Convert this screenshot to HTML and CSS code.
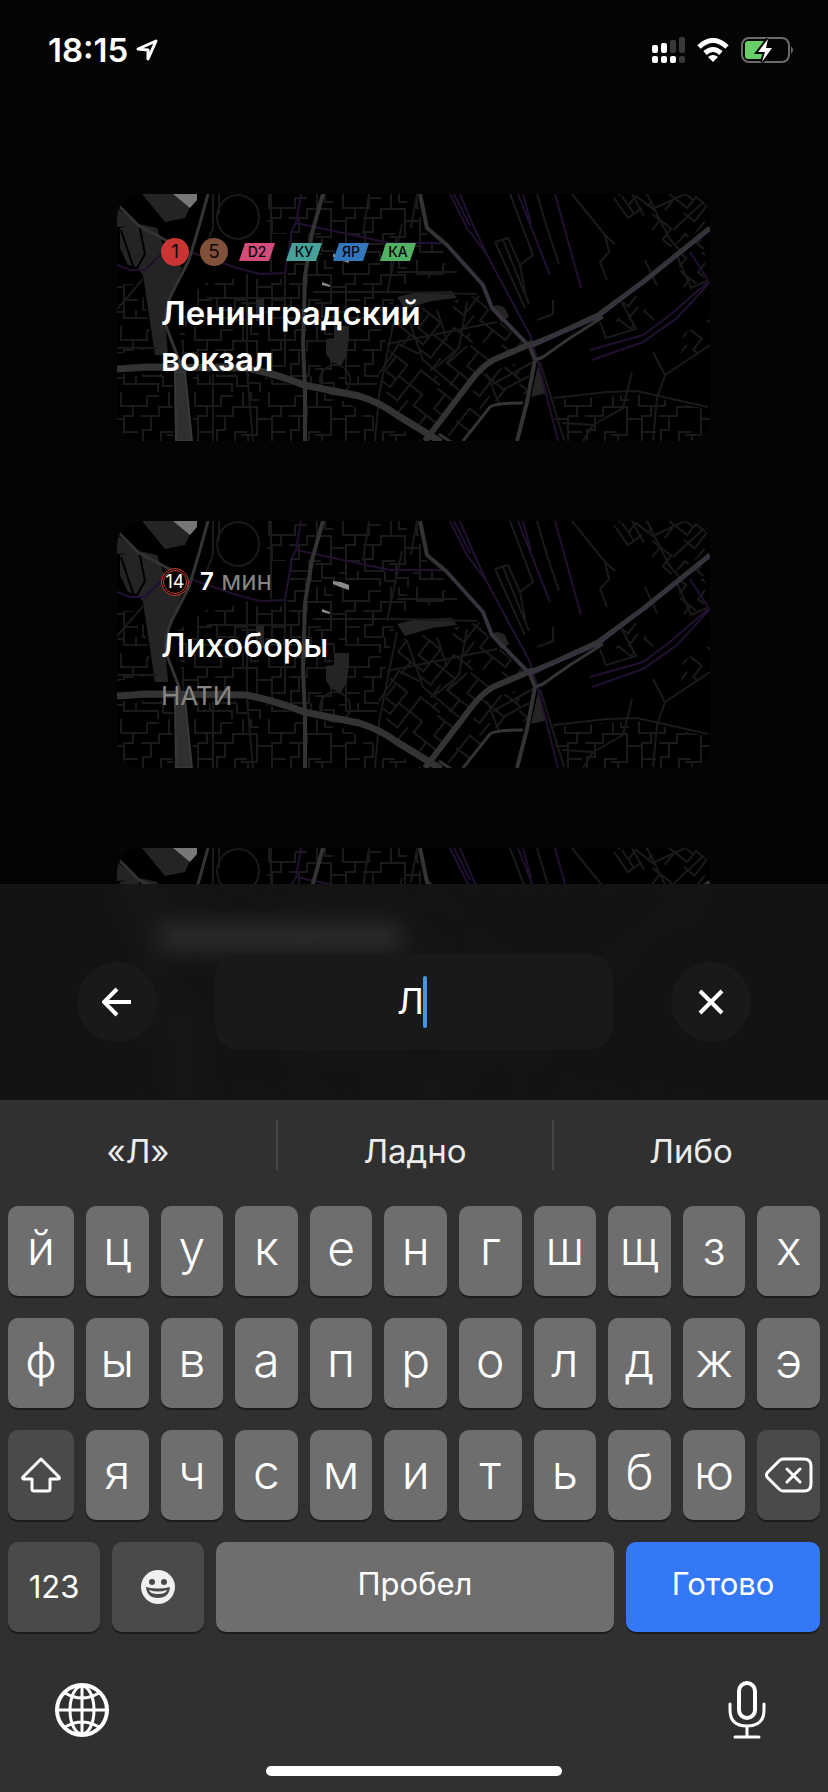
FILE: index.html
```html
<!DOCTYPE html>
<html lang="ru">
<head>
<meta charset="utf-8">
<meta name="viewport" content="width=device-width, initial-scale=1">
<title>Поиск станции</title>
<link rel="stylesheet" href="styles.css">
</head>
<body>
<svg class="defs" aria-hidden="true">
  <defs>
    <pattern id="blocks" width="74" height="66" patternUnits="userSpaceOnUse">
      <path class="lane" d="M4 0v14h12v10h-9v16h14M16 14h14V4M24 24h18v-9h10V0M34 24v14h-8v12h18v-10h12M7 40v18h12v-8M19 58h22v8M52 15h14v12h8M66 27v16h-9v14h12v9M46 50v10h11M0 27h7M30 4h12M57 43h-7M60 0v8h8M0 52h7"/>
    </pattern>
    <pattern id="blocks-slant" width="62" height="54" patternUnits="userSpaceOnUse" patternTransform="rotate(38)">
      <path class="lane" d="M0 10h24v14h14V6h24M10 10v18h14M24 24v14H8v16M38 24h16v14h8M38 24v20h-14M46 38v16M0 38h8M54 6V0"/>
    </pattern>
    <symbol id="map" viewBox="0 0 593 247" preserveAspectRatio="xMidYMid slice">
      <rect width="593" height="247" fill="#000"/>
      <path fill="url(#blocks)" d="M150 0H300L306 36 326 54 330 80 280 92 258 200 187 190 150 176 66 170 60 110 95 85H170L172 40H150z"/>
      <path fill="url(#blocks)" d="M0 180h56v67H0zM76 180l60 0 80 22 90 45H76zM0 90l24 0 12 64-36 6zM436 206l84-6 73 16v31H440z"/>
      <path fill="url(#blocks-slant)" d="M262 205l20-86 80-18 12 18 38 36-60 32-40 55zM366 180l44-14v34l-34 8-28 36-18-2zM500 0h93v30l-40 24zM560 62l28-22v42l-20 18zM496 118l20-20 22 28-34 14zM566 140l27-16v26l-30 20z"/>
      <g fill="#242424">
        <path d="M25 0h31l17 13-5 11-20 4zM18 29l22 5 6 17 19 23-12 30-5 20 3 37H38L26 81 20 73 11 71 3 54V34z"/>
        <path d="M217 132h15v11l-2 17-6 12-9-4-6-8v-15l8-1zM280 103l20-5 35-1 5 7-25 3-27 8zM421 171l9 28-16 4zM375 114q4-6 13 0l4 9-8 5zM139 103h8v24h-8z"/>
        <path d="M0 14l22 17-22 2z"/>
      </g>
      <path class="gap" d="M4 36l12 36M22 30l6 30-8 14"/>
      <path d="M56 0h24v6l-7 8z" fill="#777"/>
      <path d="M216 60l8 1 8 3v5l-9-3-7-3zM205 88l8 3v2l-8-2z" fill="#888"/>
      <g class="lane">
        <ellipse cx="121" cy="23" rx="21" ry="22"/><circle cx="218" cy="186" r="15"/>
        <path d="M96 0v34l-8 20M102 0v20M154 0v78M130 80v94M168 80v92M0 115l26-30M0 154h40M90 104h90M196 98h84l80 2M280 78h60M270 100l15-70M300 0l-6 34M252 0l-6 40M258 247l4-46 18-90M96 180v67M130 178l6 69"/>
        <path d="M393 0l23 61-13 10 5 27M420 0l10 34 12 36M378 48l13-4 12 27M378 48l30 66M386 46l26 64M455 0l33 41 4 17-9 10 7 18M488 41l10 9"/>
        <path d="M436 204l54-6 30-1 71 16M445 229l31 2 30-17 9-36M536 158l12 23-8 23-4 42M548 181l45-30M476 231l-10 16M423 168l24 78"/>
        <path d="M497 4l14 20 14-10M505 2l12 18M515 0l12 22M530 0l22 44 12 14M538 14l30-14M556 36l37-34M483 128l6 16 30-9-16-30M420 126l16-6v-14M560 62l14 32 18-8M528 66l12 26"/>
        <path d="M270 150l50-10 60-12M262 180l20-30 20 10M290 120l16 46 36 30M320 116l10 30M350 108l-8 46-24 20M330 170l20-18M370 180l12 30M376 190l40-22M386 196l26-14"/>
      </g>
      <g class="rail">
        <path d="M0 71l13 5h15l18-18 30 1 44 15 23 6 25-1 7-43 4-7 5-29M179 29l94 20h55"/>
        <path d="M333 0l17 34 20 27 43 80 8 27 20 79M343 0l13 31 15 32M337 0l16 32M401 0l32 81M406 0l8 30M438 0l26 94M473 156l53-15 27-20 38-33M475 166l51-18 34-24 33-36M573 58l18 28"/>
      </g>
      <g class="road">
        <path class="w3" d="M0 10l22 22 38 20M91 0l-8 29-11 37-17 33q-8 17-6 33l13 34 2 12"/>
        <path class="w4" d="M206 0l-11 39-7 43-2 67 2 47v51"/>
        <path class="w7" d="M0 175l30-2 99 1q30 6 58 17l55 11q20 6 38 19l44 27"/>
        <path class="w4" d="M303 0l7 34 20 17 36 40 9 23 38 39 5 13-8 42-10 39"/>
        <path class="w6" d="M308 247l45-59q10-14 23-22l40-17"/>
        <path class="w3" d="M413 150l68-27M423 165l30-21 33-21M418 166l10-4M346 247l27-34q4-4 33-4M322 240l12 8"/>
        <path class="w5" d="M416 151l65-30 45-33 67-54"/>
      </g>
      <path d="M58 178h10l7 69H59z" fill="#2f2f2f" stroke="#383838" stroke-width="2"/>
      <path class="rail soft" d="M330 51l36 40 9 23 38 39 68-29 45-35 67-53"/>
    </symbol>
  </defs>
</svg>

<header class="status">
  <div class="status-side">
    <span class="clock">18:15</span>
    <svg width="22" height="22" viewBox="0 0 22 22" fill="none" stroke="#fff" stroke-width="3" stroke-linejoin="round"><path d="M2 10L20 2 12 20V11z"/></svg>
  </div>
  <div class="status-side status-right">
    <svg width="33" height="26" viewBox="0 0 33 26" fill="#fff"><rect y="8" width="6" height="8" rx="2"/><rect x="9" y="6" width="6" height="10" rx="2"/><rect y="19" width="6" height="7" rx="2"/><rect x="9" y="19" width="6" height="7" rx="2"/><rect x="18" y="19" width="6" height="7" rx="2"/><g fill="#383838"><rect x="18" y="3" width="6" height="13" rx="2"/><rect x="27" width="6" height="16" rx="2"/><rect x="27" y="19" width="6" height="7" rx="2"/></g></svg>
    <svg width="32" height="24" viewBox="0 0 32 24"><g fill="none" stroke="#fff" stroke-width="5"><path d="M2 9Q16-4 30 9"/><path d="M8 15q8-7 16 0"/></g><path d="M11 19q5-4 10 0l-5 5z" fill="#fff"/></svg>
    <svg width="54" height="26" viewBox="0 0 54 26"><rect x="1" y="1" width="47" height="24" rx="7" fill="none" stroke="#6b6b6b" stroke-width="2"/><path d="M50 9q4 4 0 8z" fill="#6b6b6b"/><path d="M7 4h17v18H7q-3 0-3-3V7q0-3 3-3z" fill="#67ce67"/><path d="M27 2L17 15h7l-3 10 10-14h-6z" fill="#fff" stroke="#040404" stroke-width="4" paint-order="stroke"/></svg>
  </div>
</header>

<main class="results">
  <article class="card">
    <svg class="map"><use href="#map"/></svg>
    <div class="meta">
      <span class="line red">1</span><span class="line brown">5</span>
      <span class="tag pink">D2</span><span class="tag teal">КУ</span><span class="tag blue">ЯР</span><span class="tag green">КА</span>
    </div>
    <h2 class="title bold">Ленинградский вокзал</h2>
  </article>
  <article class="card station">
    <svg class="map"><use href="#map"/></svg>
    <div class="meta">
      <span class="line ring">14</span>
      <span class="walk"><b>7</b> мин</span>
    </div>
    <h2 class="title">Лихоборы</h2>
    <p class="sub">НАТИ</p>
  </article>
  <article class="card">
    <svg class="map"><use href="#map"/></svg>
    <div class="title-stub"></div>
  </article>
</main>

<section class="dock">
  <form class="search">
    <button class="round" type="button" aria-label="Назад"><svg width="30" height="30" viewBox="0 0 30 30"><path d="M29 15H3M15 2L2 15l13 13"/></svg></button>
    <label class="field"><input class="query" type="text" value="Л" aria-label="Станция"><span class="caret"></span></label>
    <button class="round" type="button" aria-label="Очистить"><svg width="30" height="30" viewBox="0 0 30 30"><path d="M4 4l22 22M26 4L4 26"/></svg></button>
  </form>

  <div class="keyboard">
    <div class="hints"><button>«Л»</button><button>Ладно</button><button>Либо</button></div>
    <div class="keys">
      <div class="row"><button class="key">й</button><button class="key">ц</button><button class="key">у</button><button class="key">к</button><button class="key">е</button><button class="key">н</button><button class="key">г</button><button class="key">ш</button><button class="key">щ</button><button class="key">з</button><button class="key">х</button></div>
      <div class="row"><button class="key">ф</button><button class="key">ы</button><button class="key">в</button><button class="key">а</button><button class="key">п</button><button class="key">р</button><button class="key">о</button><button class="key">л</button><button class="key">д</button><button class="key">ж</button><button class="key">э</button></div>
      <div class="row">
        <button class="key dark" aria-label="Shift"><svg width="40" height="36" viewBox="0 0 40 36"><path d="M20 2L2 20q-1 2 1 2h8v10q0 2 2 2h14q2 0 2-2V22h8q2 0 1-2z"/></svg></button>
        <button class="key">я</button><button class="key">ч</button><button class="key">с</button><button class="key">м</button><button class="key">и</button><button class="key">т</button><button class="key">ь</button><button class="key">б</button><button class="key">ю</button>
        <button class="key dark" aria-label="Удалить"><svg width="48" height="36" viewBox="0 0 48 36"><path d="M18 2h21q7 0 7 7v18q0 7-7 7H18q-2 0-4-2L2 20q-1-2 0-4L14 4q2-2 4-2zM22 12l13 13M35 12L22 25"/></svg></button>
      </div>
      <div class="row last">
        <button class="key dark word">123</button>
        <button class="key dark" aria-label="Эмодзи"><svg class="face" width="36" height="36" viewBox="0 0 36 36"><circle cx="18" cy="18" r="17" fill="#f0f0f0"/><g fill="#4a4a4a"><circle cx="12" cy="13" r="3"/><circle cx="24" cy="13" r="3"/><path d="M6 18q12 3 24 0-1 11-12 11T6 18z"/></g><path d="M9 21q9 3 18 0-1 4-9 4t-9-4z" fill="#f0f0f0"/></svg></button>
        <button class="key word space">Пробел</button>
        <button class="key word done">Готово</button>
      </div>
    </div>
    <div class="tools">
      <button aria-label="Сменить язык"><svg width="54" height="54" viewBox="0 0 54 54"><circle cx="27" cy="27" r="25" stroke-width="4"/><g stroke-width="3"><path d="M27 2v50M2 27h50M10 10q17 10 34 0M10 44q17-10 34 0"/><ellipse cx="27" cy="27" rx="12" ry="24"/></g></svg></button>
      <button aria-label="Диктовка"><svg width="38" height="58" viewBox="0 0 38 58"><rect x="11" y="2" width="16" height="35" rx="8" stroke-width="4"/><path d="M2 23v6q0 16 17 16t17-16v-6M19 45v10M7 56h24" stroke-width="3"/></svg></button>
    </div>
    <div class="home"></div>
  </div>
</section>
</body>
</html>
```
FILE: styles.css
```css
* { box-sizing: border-box; }
body {
  margin: 0;
  height: 100vh;
  overflow: hidden;
  background: #040404;
  color: #fff;
  font-family: Inter, "Noto Sans", sans-serif;
}
button {
  margin: 0;
  padding: 0;
  border: 0;
  background: none;
  color: inherit;
  font: inherit;
  display: flex;
  align-items: center;
  justify-content: center;
}
.defs { position: absolute; width: 0; height: 0; }

.status {
  height: 100px;
  padding: 0 33px 0 48px;
  display: flex;
  align-items: center;
  justify-content: space-between;
}
.status-side { display: flex; align-items: center; gap: 8px; }
.status-right { gap: 12px; }
.clock { font-size: 33px; font-weight: 600; line-height: 40px; }

.results {
  padding: 94px 118px 0 117px;
  display: grid;
  gap: 80px;
}
.card {
  position: relative;
  height: 247px;
  padding: 44px;
  border-radius: 24px;
  overflow: hidden;
}
.map { position: absolute; inset: 0; width: 100%; height: 100%; }
.lane { fill: none; stroke: #1a1a1a; stroke-width: 2; }
.gap { fill: none; stroke: #000; stroke-width: 2; }
.rail { fill: none; stroke: #221030; stroke-width: 2; }
.soft { stroke: #3a3044; }
.road { fill: none; stroke: #333; stroke-linejoin: round; }
.w3 { stroke-width: 3; }
.w4 { stroke-width: 4; }
.w5 { stroke-width: 5; }
.w6 { stroke-width: 6; }
.w7 { stroke-width: 7; }

.meta { position: relative; display: flex; align-items: center; gap: 11px; }
.line {
  width: 28px;
  height: 28px;
  border-radius: 50%;
  display: grid;
  place-items: center;
  font-size: 19px;
  line-height: 28px;
  color: #120808;
}
.red { background: #c83532; }
.brown { background: #80513a; }
.ring { border: 3px double #c8402f; color: #fff; background: #000; font-size: 18px; line-height: 22px; }
.tag {
  width: 36px;
  height: 18px;
  clip-path: polygon(6px 0, 100% 0, 30px 100%, 0 100%);
  color: #06080c;
  font-size: 14px;
  font-weight: 500;
  line-height: 18px;
  text-align: center;
}
.pink { background: #d34d7c; }
.teal { background: #48a199; }
.blue { background: #3277bb; }
.green { background: #52b163; }
.walk { font-size: 26px; line-height: 28px; color: #858585; }
.walk b { color: #fff; font-size: 24px; font-weight: 600; }
.title {
  position: relative;
  max-width: 320px;
  margin: 24px 0 0;
  font-size: 33px;
  line-height: 46px;
  font-weight: 500;
}
.bold { font-weight: 600; }
.station { padding-top: 46px; }
.station .title { margin-top: 26px; }
.sub { position: relative; margin: 8px 0 0; font-size: 26px; line-height: 40px; color: #858585; }
.title-stub { position: relative; width: 240px; height: 22px; margin-top: 34px; background: #fff; }

.dock { position: fixed; left: 0; right: 0; bottom: 0; }
.search {
  padding: 70px 77px 50px;
  display: flex;
  align-items: center;
  gap: 58px;
  background: rgba(22, 22, 22, .88);
  backdrop-filter: blur(12px);
}
.round { width: 80px; height: 80px; border-radius: 50%; background: #191919; }
.round svg { fill: none; stroke: #fff; stroke-width: 4; }
.field {
  flex: 1;
  height: 96px;
  padding-right: 4px;
  border-radius: 24px;
  background: #191919;
  display: flex;
  align-items: center;
  justify-content: center;
}
.query {
  width: 26px;
  padding: 0 0 2px;
  border: 0;
  outline: 0;
  background: none;
  color: #fff;
  font: 36px/48px Inter, "Noto Sans", sans-serif;
  text-align: right;
}
.caret { width: 4px; height: 52px; border-radius: 2px; background: #4a93ea; }

.keyboard { background: #303030; padding: 20px 8px 16px; }
.hints { display: grid; grid-template-columns: repeat(3, 1fr); margin: 0 -8px; }
.hints button { height: 50px; padding-top: 12px; font-size: 33px; color: #ececec; }
.hints button + button { border-left: 2px solid #464646; }
.keys { margin-top: 36px; display: grid; gap: 22px; }
.row { display: grid; grid-template-columns: 66px repeat(10, minmax(0, 1fr)); gap: 12px; }
.row.last { grid-template-columns: 92px 92px minmax(0, 1fr) 194px; }
.key {
  height: 90px;
  padding-bottom: 8px;
  border-radius: 10px;
  background: #6e6e6e;
  box-shadow: 0 2px 0 #1b1b1b;
  font-size: 48px;
  font-weight: 300;
}
.key.dark { background: #4a4a4a; padding-bottom: 0; }
.key svg { fill: none; stroke: #fff; stroke-width: 3; stroke-linecap: round; stroke-linejoin: round; }
.key .face { stroke: none; }
.key.word { font-size: 31px; font-weight: 400; }
.key.dark.word { padding-bottom: 2px; }
.key.done { background: #3478f6; }
.tools {
  margin: 49px 0 27px;
  padding: 0 54px 0 47px;
  display: flex;
  align-items: center;
  justify-content: space-between;
}
.tools svg { fill: none; stroke: #fff; stroke-linecap: round; }
.home { width: 296px; height: 10px; margin: 0 auto; border-radius: 5px; background: #fff; }
```
